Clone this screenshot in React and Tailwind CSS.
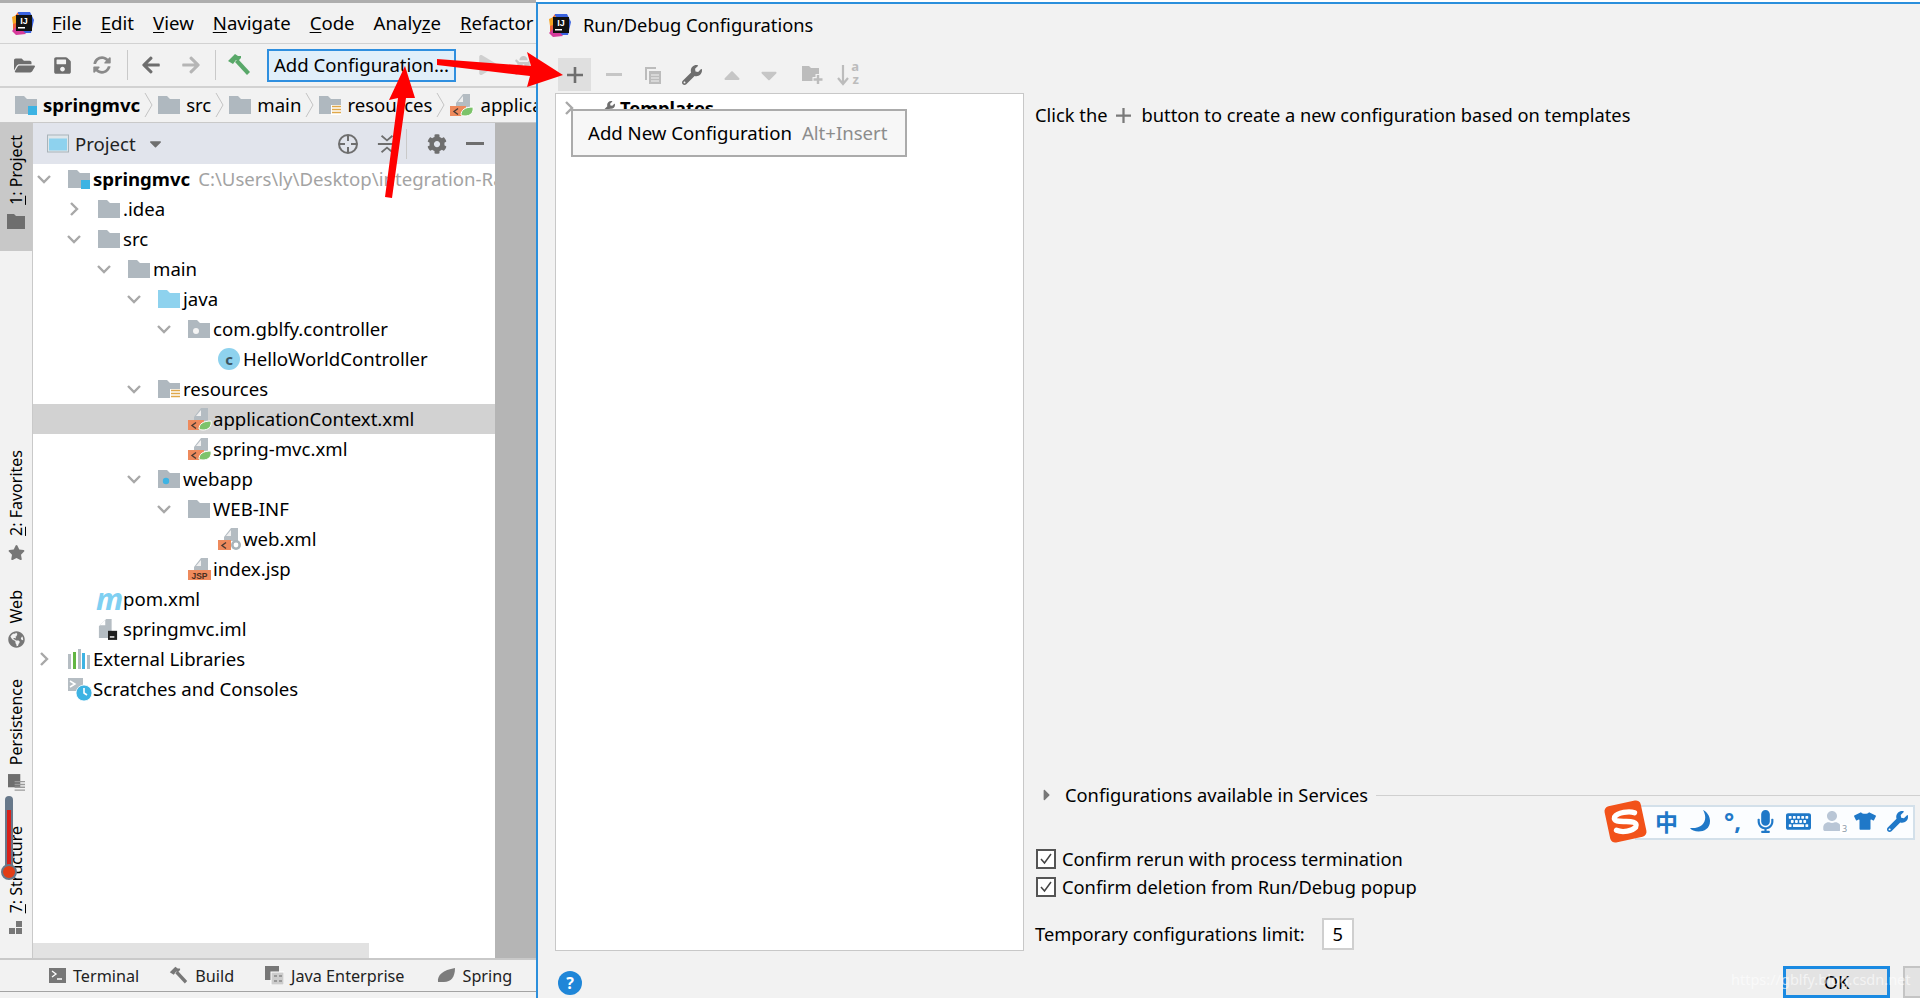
import { FaFolderOpen, FaSave, FaSyncAlt, FaArrowLeft, FaArrowRight, FaCog, FaWrench, FaStar, FaGlobeAmericas, FaMicrophone, FaKeyboard, FaTshirt, FaUser, FaPlay, FaBug, FaCaretDown, FaCaretUp, FaCaretRight } from 'react-icons/fa';

function Chevron({ open, className = '' }) {
  return (
    <svg viewBox="0 0 16 16" className={`w-[16px] h-[16px] ${className}`} fill="none" stroke="#a8a8a8" strokeWidth="2.4">
      <path d={open ? 'M2 5l6 6 6-6' : 'M5 2l6 6-6 6'} />
    </svg>
  );
}

function Folder({ kind = 'plain', className = 'w-[22px] h-[20px]' }) {
  const fill = kind === 'source' ? '#8ed2ee' : '#afb8bf';
  return (
    <svg viewBox="0 0 22 20" className={`shrink-0 ${className}`}>
      <path d="M0 1h9l3 3h10v15H0z" fill={fill} />
      {kind === 'package' && <circle cx="8" cy="12" r="3" fill="#f4f4f4" />}
      {kind === 'web' && <circle cx="8" cy="12" r="3.2" fill="#3db3e3" />}
      {kind === 'module' && <rect x="13" y="11" width="9" height="9" fill="#3db3e3" />}
      {kind === 'resources' && (
        <g>
          <rect x="12" y="10" width="10" height="10" fill="#fff" />
          <path d="M13 11.5h9M13 14.5h9M13 17.5h9" stroke="#e0a84a" strokeWidth="1.6" />
        </g>
      )}
    </svg>
  );
}

function FileBase({ badge }) {
  return (
    <svg viewBox="0 0 24 24" className="w-[24px] h-[24px] shrink-0">
      <path d="M6 10L13 1h7v13H6z" fill="#b4bcc2" />
      <path d="M8 9l5-6v6z" fill="#f0f0f0" />
      {badge === 'spring' && (
        <g>
          <rect x="0" y="13" width="16" height="10" fill="#ee8a5c" />
          <path d="M8 15.5l-4 3 4 3" stroke="#4a3a33" strokeWidth="1.4" fill="none" />
          <path d="M11 22c0-5 4-8 12-8 1 6-3 9-8 9-1.500 0-3-.3-4-1z" fill="#7cc36a" stroke="#fff" strokeWidth="1" />
        </g>
      )}
      {badge === 'web' && (
        <g>
          <rect x="0" y="13" width="13" height="10" fill="#ee8a5c" />
          <path d="M8 15.500l-4 3 4 3" stroke="#4a3a33" strokeWidth="1.4" fill="none" />
          <circle cx="18" cy="18" r="5" fill="#a9b4ba" />
          <circle cx="18" cy="18" r="2.400" fill="#fff" />
        </g>
      )}
      {badge === 'jsp' && (
        <g>
          <rect x="0" y="13" width="23" height="10" fill="#ee8a5c" />
          <text x="11.5" y="21.5" textAnchor="middle" fontSize="8.5" fontWeight="700" fill="#4a2f20" fontFamily="Liberation Sans">JSP</text>
        </g>
      )}
    </svg>
  );
}

function ImlFile() {
  return (
    <svg viewBox="0 0 22 24" className="w-[20px] h-[24px] shrink-0">
      <path d="M1 9l8-8h6v21H1z" fill="#b5bdc3" />
      <path d="M2 8l6-6v6z" fill="#fff" />
      <rect x="11" y="14" width="10" height="10" fill="#1f1f1f" />
      <rect x="13" y="20" width="5" height="1.5" fill="#fff" />
    </svg>
  );
}

function ClassIcon() {
  return (
    <div className="w-[22px] h-[22px] rounded-full bg-[#8ed2ee] flex items-center justify-center text-[15px] leading-[20px] font-bold text-[#3d5561] shrink-0">c</div>
  );
}

function LibrariesIcon() {
  return (
    <svg viewBox="0 0 22 20" className="w-[22px] h-[20px] shrink-0">
      <rect x="0" y="5" width="3" height="15" fill="#b5bdc3" />
      <rect x="5" y="3" width="3" height="17" fill="#62b543" />
      <rect x="10" y="0" width="3" height="20" fill="#b5bdc3" />
      <rect x="14" y="4" width="3" height="16" fill="#3db3e3" />
      <rect x="19" y="6" width="3" height="14" fill="#b5bdc3" />
    </svg>
  );
}

function ScratchIcon() {
  return (
    <svg viewBox="0 0 24 24" className="w-[24px] h-[24px] shrink-0">
      <rect x="0" y="1" width="15" height="13" fill="#b5bdc3" />
      <path d="M2 4l5 3-5 3" stroke="#fff" strokeWidth="1.5" fill="none" />
      <circle cx="16" cy="16" r="8" fill="#3db3e3" stroke="#fff" strokeWidth="0.8" />
      <path d="M16 11v5l3 2" stroke="#fff" strokeWidth="1.6" fill="none" />
    </svg>
  );
}

function IdeaLogo({ className = '' }) {
  return (
    <svg viewBox="0 0 24 24" className={`w-[24px] h-[24px] shrink-0 ${className}`}>
      <path d="M2 8L7 1l5 1-6 20-4-3z" fill="#f0603a" />
      <path d="M7 1h12l4 8-3 13H8z" fill="#3a63e0" />
      <path d="M1 20l6-6 8 9-10 1z" fill="#d63c9b" />
      <path d="M1 6l7-3v8l-6 2z" fill="#f6a623" />
      <rect x="5" y="4" width="16" height="16" fill="#111" />
      <text x="13" y="13" textAnchor="middle" fontSize="9" fontWeight="700" fill="#fff" fontFamily="Liberation Sans">IJ</text>
      <rect x="7" y="16" width="7" height="1.5" fill="#fff" />
    </svg>
  );
}

function Hammer() {
  return (
    <svg viewBox="0 0 24 24" className="w-[24px] h-[24px]">
      <path d="M1 8l7-7 3 2 3 0 0 2-3 3-2-1-3 4z" fill="#59a869" />
      <path d="M8 9l3-3 12 13-3 3z" fill="#59a869" />
    </svg>
  );
}

function MenuLabel({ u, rest, before = '', after = '', className = '' }) {
  return (
    <span className={className}>
      {before}
      <span className="underline underline-offset-2">{u}</span>
      {rest}
      {after}
    </span>
  );
}

function Crumb({ icon, label, bold, last }) {
  return (
    <div className="flex items-center shrink-0">
      {icon}
      <span className={`ml-[6px] ${bold ? 'font-bold' : ''}`}>{label}</span>
      {!last && (
        <svg viewBox="0 0 10 26" className="w-[10px] h-[26px] mx-[4px]" fill="none" stroke="#c4c4c4" strokeWidth="1">
          <path d="M1 1l7 12-7 12" />
        </svg>
      )}
    </div>
  );
}

const TREE_ROWS = [
  { pad: 'pl-[3px]', chevron: 'open', icon: <Folder kind="module" />, label: 'springmvc', bold: true, hint: 'C:\\Users\\ly\\Desktop\\integration-Ra' },
  { pad: 'pl-[33px]', chevron: 'closed', icon: <Folder />, label: '.idea' },
  { pad: 'pl-[33px]', chevron: 'open', icon: <Folder />, label: 'src' },
  { pad: 'pl-[63px]', chevron: 'open', icon: <Folder />, label: 'main' },
  { pad: 'pl-[93px]', chevron: 'open', icon: <Folder kind="source" />, label: 'java' },
  { pad: 'pl-[123px]', chevron: 'open', icon: <Folder kind="package" />, label: 'com.gblfy.controller' },
  { pad: 'pl-[153px]', icon: <ClassIcon />, label: 'HelloWorldController' },
  { pad: 'pl-[93px]', chevron: 'open', icon: <Folder kind="resources" />, label: 'resources' },
  { pad: 'pl-[123px]', icon: <FileBase badge="spring" />, label: 'applicationContext.xml', selected: true },
  { pad: 'pl-[123px]', icon: <FileBase badge="spring" />, label: 'spring-mvc.xml' },
  { pad: 'pl-[93px]', chevron: 'open', icon: <Folder kind="web" />, label: 'webapp' },
  { pad: 'pl-[123px]', chevron: 'open', icon: <Folder />, label: 'WEB-INF' },
  { pad: 'pl-[153px]', icon: <FileBase badge="web" />, label: 'web.xml' },
  { pad: 'pl-[123px]', icon: <FileBase badge="jsp" />, label: 'index.jsp' },
  { pad: 'pl-[33px]', icon: <span className="w-[22px] -ml-[2px] text-center text-[30px] leading-[24px] italic font-bold text-[#7fd0f2] shrink-0">m</span>, label: 'pom.xml' },
  { pad: 'pl-[33px]', icon: <ImlFile />, label: 'springmvc.iml' },
  { pad: 'pl-[3px]', chevron: 'closed', icon: <LibrariesIcon />, label: 'External Libraries' },
  { pad: 'pl-[3px]', icon: <ScratchIcon />, label: 'Scratches and Consoles' },
];

function TreeRow({ row }) {
  return (
    <div className={`h-[30px] flex items-center text-black ${row.pad} ${row.selected ? 'bg-[#d2d2d2]' : ''}`}>
      <div className="w-[32px] shrink-0 flex justify-start">
        {row.chevron && <Chevron open={row.chevron === 'open'} />}
      </div>
      <div className="w-[25px] shrink-0 flex items-center justify-start">{row.icon}</div>
      <span className={row.bold ? 'font-bold shrink-0' : 'shrink-0'}>{row.label}</span>
      {row.hint && <span className="ml-[8px] text-[#a3a3a3] shrink-0">{row.hint}</span>}
    </div>
  );
}

function SideTab({ icon, num, rest, active, className = '' }) {
  return (
    <div className={`flex flex-col items-center shrink-0 w-[32px] ${active ? 'bg-[#c8c8c8]' : ''} ${className}`}>
      <span className="[writing-mode:vertical-rl] rotate-180 text-[16px] leading-[34px] text-black">
        {num && <span className="underline">{num}</span>}
        {rest}
      </span>
      <div className="mt-[8px] text-[#777] flex justify-center">{icon}</div>
    </div>
  );
}

function LeftStrip() {
  return (
    <div className="w-[33px] shrink-0 bg-[#f2f2f2] border-r border-[#c9c9c9] flex flex-col overflow-hidden">
      <SideTab
        active
        num="1"
        rest=": Project"
        className="h-[128px] pt-[12px]"
        icon={<svg viewBox="0 0 18 16" className="w-[18px] h-[16px]"><path d="M0 1h7l2 2h9v13H0z" fill="#6e6e6e" /></svg>}
      />
      <SideTab num="2" rest=": Favorites" className="mt-[199px]" icon={<FaStar size={17} />} />
      <SideTab rest="Web" className="mt-[29px]" icon={<FaGlobeAmericas size={17} />} />
      <SideTab
        rest="Persistence"
        className="mt-[31px]"
        icon={<svg viewBox="0 0 18 20" className="w-[17px] h-[19px]"><rect x="0" y="0" width="13" height="14" fill="#6e6e6e" /><path d="M7 8h11M7 11h11M7 14h11M7 17h11" stroke="#9a9a9a" strokeWidth="1.5" /></svg>}
      />
      <SideTab
        num="7"
        rest=": Structure"
        className="mt-[33px]"
        icon={<svg viewBox="0 0 14 14" className="w-[14px] h-[14px]"><rect x="7" y="0" width="6" height="6" fill="#777" /><rect x="0" y="7" width="6" height="6" fill="#777" /><rect x="7" y="7" width="6" height="6" fill="#777" /></svg>}
      />
    </div>
  );
}

function ProjectPanel() {
  return (
    <div className="flex-1 min-w-0 flex flex-col bg-white relative">
      <div className="h-[41px] shrink-0 bg-[#e1e4ec] flex items-center text-[#222]">
        <svg viewBox="0 0 22 18" className="w-[22px] h-[19px] ml-[14px] shrink-0">
          <rect x="0.5" y="0.5" width="21" height="17" fill="#dfe6ea" stroke="#a9b4ba" />
          <rect x="2" y="4" width="18" height="12" fill="#8ed2ee" />
        </svg>
        <span className="ml-[6px]">Project</span>
        <FaCaretDown size={19} className="ml-[10px] text-[#6e6e6e] shrink-0" />
        <svg viewBox="0 0 22 22" className="w-[22px] h-[22px] ml-[172px] shrink-0" fill="none" stroke="#6e6e6e" strokeWidth="2">
          <circle cx="11" cy="11" r="9" />
          <path d="M11 2v6M11 14v6M2 11h6M14 11h6" />
        </svg>
        <svg viewBox="0 0 22 22" className="w-[20px] h-[22px] ml-[18px] shrink-0" fill="none" stroke="#6e6e6e" strokeWidth="2">
          <path d="M1 11h20M5 2l6 5 6-5M5 20l6-5 6 5" />
        </svg>
        <div className="w-px h-[30px] bg-[#c9c9c9] ml-[9px] shrink-0" />
        <FaCog size={20} className="ml-[20px] text-[#6e6e6e] shrink-0" />
        <div className="w-[18px] h-[2.5px] bg-[#6e6e6e] ml-[19px] shrink-0" />
      </div>
      <div className="flex-1 overflow-hidden">
        {TREE_ROWS.map((row) => <TreeRow key={row.label} row={row} />)}
      </div>
      <div className="h-[15px] w-[336px] bg-[#e2e2e2] shrink-0" />
    </div>
  );
}

function BottomTab({ icon, label, className = '' }) {
  return (
    <div className={`flex items-center text-[16.2px] text-[#222] ${className}`}>
      {icon}
      <span className="ml-[7px]">{label}</span>
    </div>
  );
}

function IdeWindow() {
  return (
    <div className="w-[536px] shrink-0 flex flex-col overflow-hidden whitespace-nowrap bg-[#f2f2f2] relative">
      <div className="h-[3px] shrink-0 bg-[#aeaeae]" />
      <div className="h-[41px] shrink-0 flex items-center border-b border-[#d2d2d2]">
        <IdeaLogo className="ml-[11px]" />
        <MenuLabel u="F" rest="ile" className="ml-[17px]" />
        <MenuLabel u="E" rest="dit" className="ml-[19px]" />
        <MenuLabel u="V" rest="iew" className="ml-[19px]" />
        <MenuLabel u="N" rest="avigate" className="ml-[19px]" />
        <MenuLabel u="C" rest="ode" className="ml-[19px]" />
        <MenuLabel before="Analy" u="z" rest="e" className="ml-[19px]" />
        <MenuLabel u="R" rest="efactor" className="ml-[19px]" />
      </div>
      <div className="h-[44px] shrink-0 flex items-center border-b-2 border-[#d2d2d2]">
        <FaFolderOpen size={21} className="ml-[14px] text-[#6e6e6e] shrink-0" />
        <FaSave size={19} className="ml-[18px] text-[#6e6e6e] shrink-0" />
        <FaSyncAlt size={18} className="ml-[21px] text-[#8a8a8a] shrink-0" />
        <div className="w-px h-[30px] bg-[#c9c9c9] ml-[16px] shrink-0" />
        <FaArrowLeft size={20} className="ml-[13px] text-[#6e6e6e] shrink-0" />
        <FaArrowRight size={20} className="ml-[20px] text-[#b5b5b5] shrink-0" />
        <div className="w-px h-[30px] bg-[#c9c9c9] ml-[14px] shrink-0" />
        <div className="ml-[11px] shrink-0"><Hammer /></div>
        <div className="ml-[16px] w-[189px] h-[33px] shrink-0 bg-[#e0effa] border-2 border-[#2f8fdf] flex items-center justify-center">Add Configuration...</div>
        <FaPlay size={20} className="ml-[22px] text-[#d0d0d0] shrink-0" />
        <FaBug size={19} className="ml-[16px] text-[#c8c8c8] shrink-0" />
      </div>
      <div className="h-[34px] shrink-0 flex items-center pl-[15px]">
        <Crumb icon={<Folder kind="module" className="w-[22px] h-[20px]" />} label="springmvc" bold />
        <Crumb icon={<Folder />} label="src" />
        <Crumb icon={<Folder />} label="main" />
        <Crumb icon={<Folder kind="resources" />} label="resources" />
        <Crumb icon={<FileBase badge="spring" />} label="applicationContext.xml" last />
      </div>
      <div className="flex-1 min-h-0 flex border-t border-[#c9c9c9]">
        <LeftStrip />
        <ProjectPanel />
        <div className="w-[41px] shrink-0 bg-[#b5b5b5]" />
      </div>
      <div className="h-[33px] shrink-0 border-t-2 border-[#c9c9c9] flex items-center">
        <BottomTab
          className="ml-[49px]"
          icon={<svg viewBox="0 0 17 15" className="w-[17px] h-[15px]"><rect width="17" height="15" fill="#777" /><path d="M3 3l4 3-4 3M8 11h5" stroke="#fff" strokeWidth="1.3" fill="none" /></svg>}
          label="Terminal"
        />
        <BottomTab
          className="ml-[30px]"
          icon={<svg viewBox="0 0 24 24" className="w-[19px] h-[19px]"><path d="M1 8l7-7 3 2 3 0 0 2-3 3-2-1-3 4z" fill="#777" /><path d="M8 9l3-3 12 13-3 3z" fill="#777" /></svg>}
          label="Build"
        />
        <BottomTab
          className="ml-[31px]"
          icon={<svg viewBox="0 0 19 19" className="w-[19px] h-[19px]"><rect width="14" height="14" fill="#777" /><rect x="6" y="6" width="13" height="13" fill="#ccc" stroke="#fff" /><path d="M9 10h3M9 15h3M14 10h3M14 15h3" stroke="#666" /></svg>}
          label="Java Enterprise"
        />
        <BottomTab
          className="ml-[32px]"
          icon={<svg viewBox="0 0 19 17" className="w-[19px] h-[17px]"><path d="M1 15C0 8 6 3 18 1c0 9-4 14-11 14-2 0-4 0-6 0z" fill="#7c7c7c" /></svg>}
          label="Spring"
        />
      </div>
      <div className="h-[7px] shrink-0 border-t border-[#a3a3a3]" />
    </div>
  );
}

function DialogTool({ children, active }) {
  return (
    <div className={`w-[33px] h-[33px] flex items-center justify-center shrink-0 mr-[6px] ${active ? 'bg-[#dfdfdf]' : ''}`}>{children}</div>
  );
}

function Check({ label }) {
  return (
    <div className="h-[24px] flex items-center">
      <div className="w-[20px] h-[20px] border-2 border-[#555] bg-white flex items-center justify-center ml-[1px]">
        <svg viewBox="0 0 14 14" className="w-[14px] h-[14px]" fill="none" stroke="#444" strokeWidth="1.5"><path d="M2 7l3.500 4L12 2" /></svg>
      </div>
      <span className="ml-[6px]">{label}</span>
    </div>
  );
}

function Dialog() {
  return (
    <div className="flex-1 min-w-0 flex flex-col bg-[#f2f2f2] border-l-2 border-t-2 border-[#2b8fdc] mt-[2px] whitespace-nowrap overflow-hidden text-[18.3px]">
      <div className="h-[54px] shrink-0 flex items-start pt-[9px] pl-[10px]">
        <IdeaLogo />
        <span className="ml-[11px] mt-[-1px]">Run/Debug Configurations</span>
      </div>
      <div className="h-[33px] shrink-0 flex items-center pl-[20px]">
        <DialogTool active>
          <svg viewBox="0 0 16 16" className="w-[16px] h-[16px]"><path d="M8 0v16M0 8h16" stroke="#6e6e6e" strokeWidth="2.6" /></svg>
        </DialogTool>
        <div className="w-[16px] h-[3px] bg-[#c6c6c6] mr-[22px] ml-[9px]" />
        <svg viewBox="0 0 18 18" className="w-[18px] h-[18px] mr-[20px]">
          <path d="M1 1h11v2H3v11H1z" fill="#bcbcbc" />
          <rect x="5" y="5" width="12" height="13" fill="#bcbcbc" />
          <path d="M7 9h8M7 12h8M7 15h8" stroke="#f2f2f2" />
        </svg>
        <FaWrench size={20} className="text-[#6e6e6e] mr-[20px]" />
        <FaCaretUp size={26} className="text-[#c6c6c6] mr-[12px] ml-[-3px]" />
        <FaCaretDown size={26} className="text-[#c6c6c6] mr-[20px] ml-[-1px]" />
        <svg viewBox="0 0 22 20" className="w-[22px] h-[20px] mr-[13px]">
          <path d="M0 1h7l2 2h8v13H0z" fill="#bcbcbc" />
          <path d="M16 9v11M10.500 14.500h11" stroke="#f2f2f2" strokeWidth="5" />
          <path d="M16 10v9M11.500 14.500h9" stroke="#bcbcbc" strokeWidth="2.400" />
        </svg>
        <div className="relative w-[20px] h-[22px]">
          <svg viewBox="0 0 20 22" className="w-[20px] h-[22px]"><path d="M6 1v18M1 14l5 6 5-6" stroke="#bcbcbc" strokeWidth="2.200" fill="none" /></svg>
          <span className="absolute right-[-2px] top-[-4px] text-[13px] leading-[13px] text-[#bcbcbc] font-bold">a</span>
          <span className="absolute right-[-2px] top-[9px] text-[13px] leading-[13px] text-[#bcbcbc] font-bold">z</span>
        </div>
      </div>
      <div className="h-[2px] shrink-0" />
      <div className="flex-1 min-h-0 flex pl-[17px]">
        <div className="w-[469px] shrink-0 bg-white border border-[#c8c8c8] relative overflow-hidden">
          <div className="h-[30px] flex items-center pl-[5px] mt-[-1px]">
            <Chevron open={false} />
            <FaWrench size={14} className="ml-[24px] text-[#6e6e6e]" />
            <span className="ml-[5px] font-bold">Templates</span>
          </div>
        </div>
        <div className="flex-1 min-w-0 flex flex-col pl-[11px]">
          <div className="h-[44px] flex items-center shrink-0">
            <span>Click the</span>
            <svg viewBox="0 0 16 16" className="w-[15px] h-[15px] ml-[8px] mr-[11px]"><path d="M8 0v16M0 8h16" stroke="#7a7a7a" strokeWidth="2.400" /></svg>
            <span>button to create a new configuration based on templates</span>
          </div>
          <div className="flex-1" />
          <div className="h-[30px] flex items-center shrink-0">
            <FaCaretRight size={18} className="text-[#777] ml-[3px]" />
            <span className="ml-[9px]">Configurations available in Services</span>
            <div className="flex-1 h-px bg-[#d0d0d0] ml-[8px]" />
          </div>
          <div className="mt-[37px] shrink-0"><Check label="Confirm rerun with process termination" /></div>
          <div className="mt-[4px] shrink-0"><Check label="Confirm deletion from Run/Debug popup" /></div>
          <div className="mt-[19px] mb-[1px] h-[32px] flex items-center shrink-0">
            <span>Temporary configurations limit:</span>
            <div className="ml-[17px] w-[32px] h-[32px] bg-white border-2 border-[#cfcfcf] flex items-center justify-center">5</div>
          </div>
        </div>
      </div>
      <div className="h-[47px] shrink-0 flex items-end justify-between pl-[20px]">
        <div className="w-[24px] h-[24px] mb-[3px] rounded-full bg-[#1f86d8] text-white font-bold text-[16px] flex items-center justify-center">?</div>
        <div className="flex items-end">
          <div className="w-[107px] h-[32px] bg-[#e3e3e3] border-[3px] border-[#1a8ae2] flex items-center justify-center">OK</div>
          <div className="w-[17px] h-[32px] ml-[13px] bg-[#e3e3e3] border-2 border-[#c4c4c4] border-r-0" />
        </div>
      </div>
    </div>
  );
}

function SogouCell({ children }) {
  return <div className="w-[33px] h-[34px] flex items-center justify-center shrink-0">{children}</div>;
}

function SogouBar() {
  return (
    <div className="absolute left-[1605px] top-[800px] w-[310px] h-[42px] flex items-center">
      <div className="absolute left-[30px] right-0 top-[5px] h-[35px] bg-[#fbfdff] border-2 border-[#d3e0ea]" />
      <div className="relative w-[37px] h-[37px] -rotate-12 ml-[2px] mr-[6px] shrink-0 rounded-[5px] bg-[#f2521a] flex items-center justify-center">
        <svg viewBox="0 0 32 32" className="w-[31px] h-[31px]" fill="none" stroke="#fff" strokeWidth="5.500" strokeLinecap="round">
          <path d="M27 9C22 6 10 5 6 9c-3 5 6 6 10 7 5 1 13 3 9 8-4 3-14 3-20-1" />
        </svg>
      </div>
      <div className="relative flex items-center text-[#1f78c8]">
        <SogouCell><span className="text-[23px] font-bold [font-family:'Noto_Sans_CJK_SC',sans-serif]">中</span></SogouCell>
        <SogouCell>
          <svg viewBox="0 0 22 24" className="w-[22px] h-[24px]"><path d="M14 1c5 8 2 19-13 18 3 5 20 6 20-7 0-5-3-9-7-11z" fill="currentColor" /></svg>
        </SogouCell>
        <SogouCell><span className="text-[24px] font-bold leading-[24px]">°,</span></SogouCell>
        <SogouCell><FaMicrophone size={23} /></SogouCell>
        <SogouCell><FaKeyboard size={25} /></SogouCell>
        <SogouCell>
          <div className="relative">
            <FaUser size={20} className="text-[#b9c6d6]" />
            <span className="absolute right-[-8px] bottom-[-3px] w-[10px] h-[10px] bg-white text-[9px] leading-[10px] text-center text-[#8a98a8]">3</span>
          </div>
        </SogouCell>
        <SogouCell><FaTshirt size={22} /></SogouCell>
        <SogouCell><FaWrench size={21} /></SogouCell>
      </div>
    </div>
  );
}

function Annotations() {
  return (
    <svg viewBox="0 0 1920 998" className="absolute inset-0 w-[1920px] h-[998px] pointer-events-none">
      <path d="M437 59L531 66L527 52L563 75L527 87L530 76L437 65z" fill="#ff0000" />
      <path d="M385 197L398 98L389 100L405 66L415 98L406 98L392 198z" fill="#ff0000" />
    </svg>
  );
}

function Thermometer() {
  return (
    <div className="absolute left-[1px] top-[796px] w-[16px] h-[84px]">
      <div className="absolute left-[4px] top-0 w-[8px] h-[78px] rounded-full bg-[#67788a]" />
      <div className="absolute left-[6px] top-[14px] w-[4px] h-[62px] bg-[#d8201a]" />
      <div className="absolute left-0 bottom-0 w-[16px] h-[16px] rounded-full bg-[#e23d16] border-2 border-[#67788a]" />
    </div>
  );
}

export default function App() {
  return (
    <div className="relative w-[1920px] h-[998px] overflow-hidden flex text-[18.6px] leading-[26px] text-black [font-family:'Noto_Sans',sans-serif]">
      <IdeWindow />
      <Dialog />
      <div className="absolute left-[571px] top-[109px] w-[336px] h-[48px] bg-[#f7f7f7] border-2 border-[#ababab] flex items-center pl-[15px] whitespace-nowrap">
        <span>Add New Configuration</span>
        <span className="ml-[10px] text-[#8c8c8c]">Alt+Insert</span>
      </div>
      <Thermometer />
      <SogouBar />
      <Annotations />
      <div className="absolute left-[1731px] top-[966px] text-[14.5px] text-white opacity-60">https://gblfy.blog.csdn.net</div>
    </div>
  );
}
